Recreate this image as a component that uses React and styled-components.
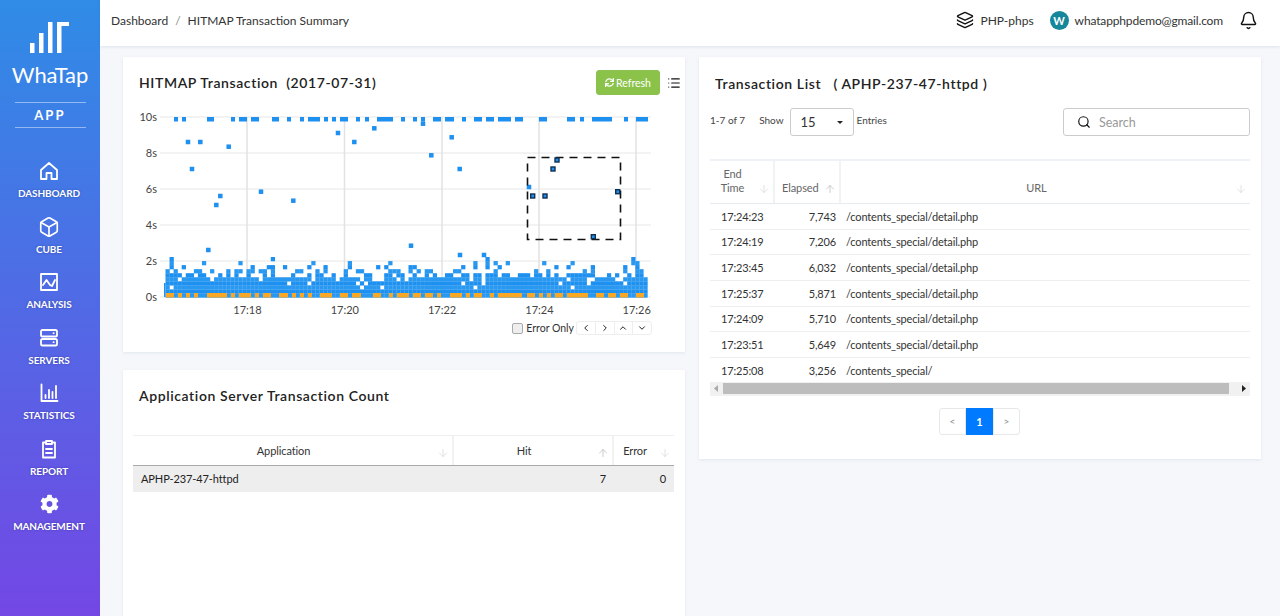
import React from "react"
import styled, { createGlobalStyle } from "styled-components"
import { Box, Layers, Bell, Search, List, ArrowDown, ArrowUp, ChevronLeft, ChevronRight, ChevronUp, ChevronDown } from "lucide-react"
import { FaSync, FaCog } from "react-icons/fa"

const GlobalStyle = createGlobalStyle`
    html, body { margin: 0; height: 100%; }
    body {
        background: #f5f7fb;
        font-family: "Lato", "Liberation Sans", sans-serif;
        color: #333;
        overflow: hidden;
    }
`

const Page = styled.div`
    display: flex;
    width: 1280px;
    height: 616px;
    overflow: hidden;
`

const Sidebar = styled.nav`
    flex: 0 0 100px;
    display: flex;
    flex-direction: column;
    align-items: center;
    padding-top: 22px;
    box-sizing: border-box;
    background: linear-gradient(180deg, #2f8ce6 0%, #7347e4 100%);
    color: #fff;
`

const LogoText = styled.div`
    font-size: 22px;
    font-weight: 400;
    line-height: 28px;
    margin-top: 8px;
    letter-spacing: -0.1px;
`

const AppTag = styled.div`
    width: 71px;
    height: 26px;
    box-sizing: border-box;
    margin: 13px 0 32px;
    border-top: 1px solid rgba(255, 255, 255, 0.45);
    border-bottom: 1px solid rgba(255, 255, 255, 0.45);
    display: flex;
    align-items: center;
    justify-content: center;
    font-size: 13px;
    font-weight: 700;
    letter-spacing: 2.2px;
`

const NavItem = styled.a`
    height: 55.5px;
    margin-right: 2px;
    display: flex;
    flex-direction: column;
    align-items: center;
    font-size: 10px;
    font-weight: 700;
    letter-spacing: -0.1px;
    line-height: 14px;
    text-shadow: 0 0 2px rgba(20, 30, 110, 0.5);
    svg { display: block; height: 22px; margin-bottom: 4px; }
`

const Content = styled.div`
    flex: 1;
    min-width: 0;
    display: flex;
    flex-direction: column;
`

const Topbar = styled.header`
    flex: 0 0 46px;
    display: flex;
    align-items: center;
    padding: 0 22px 6px 11px;
    box-sizing: border-box;
    background: #fff;
    box-shadow: 0 1px 3px rgba(60, 80, 130, 0.12);
    font-size: 12px;
    color: #333;
`

const Crumbs = styled.div`
    flex: 1;
    display: flex;
    gap: 7px;
    span { color: #888; }
`

const TopItem = styled.div`
    display: flex;
    align-items: center;
    gap: ${props => props.gap || 6}px;
    margin-left: ${props => props.left || 0}px;
    letter-spacing: ${props => props.tight ? "-0.15px" : "0"};
`

const Avatar = styled.div`
    width: 19px;
    height: 19px;
    border-radius: 50%;
    background: #14879b;
    color: #fff;
    font-size: 11px;
    font-weight: 700;
    letter-spacing: 0;
    display: flex;
    align-items: center;
    justify-content: center;
`

const Columns = styled.main`
    flex: 1;
    min-height: 0;
    display: grid;
    grid-template-columns: 562px 562px;
    gap: 14px;
    padding: 11px 19px 0 23px;
    align-items: start;
`

const Stack = styled.div`
    display: flex;
    flex-direction: column;
    gap: 18px;
    height: 620px;
`

const Card = styled.section`
    background: #fff;
    box-shadow: 0 1px 3px rgba(60, 80, 130, 0.1);
    box-sizing: border-box;
    flex: ${props => props.grow ? "1" : "none"};
    height: ${props => props.height ? props.height + "px" : "auto"};
`

const HitmapHead = styled.div`
    display: flex;
    align-items: center;
    height: 25px;
    padding: 13px 4px 10px 16px;
`

const Title = styled.h2`
    margin: 0;
    font-size: 14px;
    font-weight: 600;
    letter-spacing: 0.6px;
    white-space: pre;
    color: #222;
    flex: 1;
`

const RefreshButton = styled.button`
    width: 64px;
    height: 25px;
    border: 1px solid #8cc152;
    border-radius: 3px;
    padding: 0;
    background: #8bc34a;
    color: #fff;
    font: 400 10.5px "Lato", sans-serif;
    display: flex;
    align-items: center;
    justify-content: center;
    gap: 2px;
`

const ListButton = styled.div`
    width: 14px;
    margin-left: 7px;
    display: flex;
    color: #111;
`

const ChartSvg = styled.svg`
    display: block;
    width: 562px;
    height: 212px;
`

const ChartControls = styled.div`
    display: flex;
    justify-content: flex-end;
    align-items: center;
    height: 16px;
    margin-top: 3px;
    padding-right: 33px;
    font-size: 10.5px;
    color: #333;
`

const CheckBox = styled.span`
    width: 9px;
    height: 9px;
    border: 1px solid #aaa;
    border-radius: 2px;
    background: #eee;
    margin-right: 3px;
`

const StepGroup = styled.div`
    display: flex;
    margin-left: 2px;
    border: 1px solid #eee;
    border-radius: 3px;
`

const StepButton = styled.span`
    width: 17.75px;
    height: 12px;
    display: flex;
    align-items: center;
    justify-content: center;
    color: #222;
    & + & { border-left: 1px solid #eee; }
`

const CountHead = styled.div`
    padding: 17px 16px 0;
    height: 48px;
`

const Grid = styled.div`
    display: grid;
    grid-template-columns: ${props => props.columns};
`

const CountTable = styled.div`
    margin: 0 11px 0 10px;
    border-top: 1px solid #eee;
`

const HeadCell = styled.div`
    position: relative;
    display: flex;
    align-items: ${props => props.bottom ? "flex-end" : "center"};
    justify-content: ${props => props.left ? "flex-start" : "center"};
    height: ${props => props.height}px;
    box-sizing: border-box;
    padding: 0 ${props => props.left ? 0 : 18}px ${props => props.bottom ? 8 : 0}px ${props => props.left ? 7 : 0}px;
    font-size: 11px;
    letter-spacing: -0.1px;
    color: ${props => props.muted ? "#666" : "#333"};
    border-right: ${props => props.last ? "none" : "2px solid #f2f2f2"};
    line-height: 14px;
    text-align: ${props => props.left ? "left" : "center"};
`

const SortIcon = styled.span`
    position: absolute;
    right: 3px;
    bottom: ${props => props.low || 6}px;
    display: flex;
    color: ${props => props.up ? "#bbb" : "#d8d8d8"};
`

const SelectedRow = styled(Grid)`
    height: 26px;
    align-items: center;
    background: #eee;
    border-top: 1px solid #aaa;
    font-size: 11px;
    letter-spacing: -0.1px;
    color: #222;
`

const ValueCell = styled.div`
    padding: 0 ${props => props.right ? 8 : 0}px 1px ${props => props.pad || 0}px;
    text-align: ${props => props.right ? "right" : "left"};
`

const ListHead = styled.div`
    padding: 18px 5px 0;
    height: 33px;
`

const ListBody = styled.div`
    padding: 0 11px;
`

const Toolbar = styled.div`
    display: flex;
    align-items: flex-start;
    height: 51px;
    font-size: 10px;
    color: #444;
`

const ToolText = styled.span`
    line-height: 24px;
    margin-right: ${props => props.right || 0}px;
    flex: ${props => props.grow ? 1 : "none"};
`

const SelectBox = styled.div`
    width: 64px;
    height: 28px;
    box-sizing: border-box;
    border: 1px solid #ccc;
    border-radius: 3px;
    display: flex;
    align-items: center;
    justify-content: space-between;
    padding: 0 10px;
    font-size: 13px;
    color: #333;
    margin: 0 3px 0 6px;
    &::after {
        content: "";
        border-left: 3.5px solid transparent;
        border-right: 3.5px solid transparent;
        border-top: 3.5px solid #222;
    }
`

const SearchBox = styled.div`
    width: 187px;
    height: 28px;
    box-sizing: border-box;
    border: 1px solid #ccc;
    border-radius: 3px;
    display: flex;
    align-items: center;
    gap: 8px;
    padding-left: 13px;
    font-size: 12.5px;
    color: #999;
    svg { color: #111; }
`

const TxHead = styled(Grid)`
    border-top: 2px solid #eef1f5;
    border-bottom: 1px solid #e6ebf2;
`

const TxRow = styled(Grid)`
    height: 25.67px;
    box-sizing: border-box;
    align-items: center;
    border-bottom: ${props => props.last ? "none" : "1px solid #eee"};
    font-size: 11px;
    letter-spacing: -0.15px;
    color: #333;
`

const TimeCell = styled.div`
    padding-left: 11px;
`

const ElapsedCell = styled.div`
    text-align: right;
    padding-right: 5px;
`

const UrlCell = styled.div`
    padding-left: 5px;
`

const ScrollTrack = styled.div`
    display: flex;
    align-items: center;
    height: 14px;
    margin-top: -2px;
    background: #f1f1f1;
    color: #555;
`

const ScrollThumb = styled.div`
    flex: 1;
    height: 11px;
    margin: 0 8px 0 0;
    background: #bdbdbd;
`

const ScrollArrow = styled.span`
    width: 13px;
    display: flex;
    justify-content: center;
    svg { fill: currentColor; }
    color: ${props => props.dim ? "#aaa" : "#222"};
`

const Pager = styled.div`
    display: flex;
    justify-content: center;
    margin-top: 12px;
    padding: 0 1px 24px 0;
`

const PageButton = styled.span`
    width: 27px;
    height: 27px;
    box-sizing: border-box;
    display: flex;
    align-items: center;
    justify-content: center;
    font-size: ${props => props.active ? 11 : 10}px;
    font-weight: ${props => props.active ? 700 : 400};
    color: ${props => props.active ? "#fff" : "#888"};
    background: ${props => props.active ? "#007bff" : "#fff"};
    border: 1px solid ${props => props.active ? "#007bff" : "#e8e8e8"};
    border-radius: ${props => props.side === "l" ? "3px 0 0 3px" : props.side === "r" ? "0 3px 3px 0" : "0"};
`

const Logo = () => (
    <svg width="40" height="31" viewBox="0 0 40 31" fill="#fff">
        <rect x="0" y="21" width="4.5" height="10" />
        <rect x="9" y="11" width="4.5" height="20" />
        <rect x="18" y="0" width="4.5" height="31" />
        <path d="M27 0h12v4h-7.5v27H27z" />
    </svg>
)

const stroke = { fill: "none", stroke: "#fff", strokeWidth: 1.8, strokeLinejoin: "round", strokeLinecap: "round" }

const HomeIcon = () => (
    <svg width="22" height="22" viewBox="0 0 22 22" {...stroke}>
        <path d="M11 3 3 10v9h5.5v-6h5v6H19v-9z" />
    </svg>
)

const AnalysisIcon = () => (
    <svg width="22" height="22" viewBox="0 0 22 22" {...stroke}>
        <path d="M3 3h16v16H3z" />
        <path d="M5 14l3.5-5 3.5 5 2 1 3-6" />
    </svg>
)

const ServersIcon = () => (
    <svg width="22" height="22" viewBox="0 0 22 22" {...stroke}>
        <rect x="3" y="3" width="16" height="6.5" rx="1.6" />
        <rect x="3" y="12" width="16" height="6.5" rx="1.6" />
        <path d="M15.5 6.2h.2M15.5 15.2h.2" />
    </svg>
)

const StatsIcon = () => (
    <svg width="22" height="22" viewBox="0 0 22 22" {...stroke}>
        <path d="M3.5 2.5v16.5h16" />
        <path d="M7.5 16v-3M11 16V8M14.5 16v-6M18 16V4" />
    </svg>
)

const ReportIcon = () => (
    <svg width="22" height="22" viewBox="0 0 22 22" {...stroke}>
        <path d="M8 4.5H5v15h12v-15h-3" />
        <path d="M8 3h6v3H8zM8 11h6M8 15h6" />
    </svg>
)

const navItems = [
    { label: "DASHBOARD", icon: <HomeIcon /> },
    { label: "CUBE", icon: <Box size={22} strokeWidth={1.8} /> },
    { label: "ANALYSIS", icon: <AnalysisIcon /> },
    { label: "SERVERS", icon: <ServersIcon /> },
    { label: "STATISTICS", icon: <StatsIcon /> },
    { label: "REPORT", icon: <ReportIcon /> },
    { label: "MANAGEMENT", icon: <FaCog size={19} /> },
]

// hitmap data, everything in page pixels / grid cells of about 4px
const CELL = 4.05
const LEFT = 165.5
const BOTTOM = 297.5
const BLUE = "#1e90f0"

const topRuns = [
    [174, 178], [182, 186], [207, 214], [231, 235], [239, 247], [251, 259], [272, 279], [287, 291], [300, 304],
    [308, 320], [324, 328], [332, 336], [340, 348], [356, 360], [365, 369], [377, 393], [401, 405], [413, 417],
    [421, 425], [433, 441], [445, 454], [462, 466], [474, 482], [486, 494], [498, 511], [515, 523], [539, 547],
    [567, 575], [580, 584], [592, 612], [624, 628], [636, 648],
]

const orangeRuns = [
    [166, 174], [178, 182], [186, 190], [194, 198], [207, 227], [231, 235], [239, 251], [255, 259], [263, 271],
    [279, 288], [292, 296], [300, 304], [308, 312], [320, 332], [340, 348], [352, 361], [373, 381], [389, 393],
    [397, 409], [413, 421], [425, 433], [437, 441], [450, 462], [466, 470], [474, 482], [490, 494], [498, 522],
    [527, 535], [539, 543], [547, 551], [555, 563], [567, 588], [596, 604], [608, 616], [620, 628], [636, 644],
]

const dots = [
    [188, 142], [200.3, 142], [228.7, 146.7], [192, 169], [220.3, 196], [216.3, 205], [261, 191.7], [293.3, 200.7],
    [338, 133], [354.3, 142], [374.3, 128.3], [451.7, 137.3], [431.3, 155.3], [459.7, 169], [423, 123.7], [529, 187],
    [208.3, 250], [411, 245.7], [460, 255], [484, 255],
]

const picked = [[532.7, 196], [545, 196], [553, 169], [557, 160], [617.7, 191.7], [593.3, 236.7]]

// explicit upper rows of the band, [row, columns]
const upperRows = [
    [9, [1, 26, 79, 115]],
    [8, [1, 9, 18, 36, 45, 55, 76, 79, 81, 84, 93, 100, 115, 116]],
    [7, [1, 4, 21, 25, 26, 29, 35, 39, 45, 52, 54, 60, 61, 73, 76, 79, 82, 96, 99, 105, 113, 116]],
]

const makeBand = () => {
    let seed = 4211
    const rand = () => {
        seed = (seed * 16807) % 2147483647
        return seed / 2147483647
    }
    const chance = [1, 1, 0.97, 0.95, 0.88, 0.55, 0.3]
    const cells = []
    for (let col = 0; col < 119; col++) {
        chance.forEach((p, row) => {
            if (rand() < p) cells.push([col, row])
        })
    }
    upperRows.forEach(([row, cols]) => cols.forEach(col => cells.push([col, row])))
    return cells
}

const band = makeBand()

const HitmapChart = () => (
    <ChartSvg viewBox="123 105 562 212">
        {[117, 153, 189, 225, 261, 297].map(y => (
            <line key={y} x1="160" x2="651" y1={y} y2={y} stroke="#e8e8e8" strokeWidth="1.2" />
        ))}
        {[247, 344.5, 442, 539, 636].map(x => (
            <line key={x} x1={x} x2={x} y1="117" y2="297" stroke="#e2e2e2" strokeWidth="1.5" />
        ))}
        {["10s", "8s", "6s", "4s", "2s", "0s"].map((t, i) => (
            <text key={t} x="157" y={121 + i * 36} textAnchor="end" fontSize="11" fill="#444">{t}</text>
        ))}
        {["17:18", "17:20", "17:22", "17:24", "17:26"].map((t, i) => (
            <text key={t} x={247.5 + i * 97.3} y="314" textAnchor="middle" fontSize="11" fill="#444">{t}</text>
        ))}
        <rect x="164" y="283" width="1.5" height="14" fill={BLUE} />
        {band.map(([col, row], i) => (
            <rect key={i} x={LEFT + col * CELL} y={BOTTOM - (row + 1) * CELL} width={CELL + 0.2} height={CELL + 0.2}
                fill={row % 2 ? BLUE : "#2898f0"} />
        ))}
        {orangeRuns.map(([a, b]) => (
            <rect key={a} x={a} y="293" width={b - a} height="4.5" fill="#f9a825" />
        ))}
        {topRuns.map(([a, b]) => (
            <rect key={a} x={a} y="117" width={b - a} height="4.5" fill={BLUE} />
        ))}
        {dots.map(([x, y]) => (
            <rect key={x} x={x - 2.25} y={y - 2.25} width="4.5" height="4.5" fill={BLUE} />
        ))}
        <rect x="527.5" y="157.5" width="93" height="82" fill="none" stroke="#111" strokeWidth="1.6" strokeDasharray="8 6" />
        {picked.map(([x, y]) => (
            <rect key={x} x={x - 2} y={y - 2} width="4" height="4" fill={BLUE} stroke="#12304f" strokeWidth="1.4" />
        ))}
    </ChartSvg>
)

const transactions = [
    ["17:24:23", "7,743", "/contents_special/detail.php"],
    ["17:24:19", "7,206", "/contents_special/detail.php"],
    ["17:23:45", "6,032", "/contents_special/detail.php"],
    ["17:25:37", "5,871", "/contents_special/detail.php"],
    ["17:24:09", "5,710", "/contents_special/detail.php"],
    ["17:23:51", "5,649", "/contents_special/detail.php"],
    ["17:25:08", "3,256", "/contents_special/"],
]

const Sort = ({ up, low }) => (
    <SortIcon up={up} low={low}>
        {up ? <ArrowUp size={12} strokeWidth={1.5} /> : <ArrowDown size={12} strokeWidth={1.5} />}
    </SortIcon>
)

const txColumns = "65px 66px 1fr"
const countColumns = "321px 160px 60px"

export default function App() {
    return (
        <Page>
            <GlobalStyle />
            <Sidebar>
                <Logo />
                <LogoText>WhaTap</LogoText>
                <AppTag>APP</AppTag>
                {navItems.map(item => (
                    <NavItem key={item.label}>
                        {item.icon}
                        {item.label}
                    </NavItem>
                ))}
            </Sidebar>
            <Content>
                <Topbar>
                    <Crumbs>
                        Dashboard <span>/</span> HITMAP Transaction Summary
                    </Crumbs>
                    <TopItem gap={7}>
                        <Layers size={18} strokeWidth={1.9} color="#111" />
                        PHP-phps
                    </TopItem>
                    <TopItem left={16} tight>
                        <Avatar>W</Avatar>
                        whatapphpdemo@gmail.com
                    </TopItem>
                    <TopItem left={16}>
                        <Bell size={19} strokeWidth={1.8} color="#111" />
                    </TopItem>
                </Topbar>
                <Columns>
                    <Stack>
                        <Card height={295}>
                            <HitmapHead>
                                <Title>{"HITMAP Transaction  (2017-07-31)"}</Title>
                                <RefreshButton><FaSync size={9} />Refresh</RefreshButton>
                                <ListButton><List size={14} strokeWidth={2} /></ListButton>
                            </HitmapHead>
                            <HitmapChart />
                            <ChartControls>
                                <CheckBox />
                                Error Only
                                <StepGroup>
                                    <StepButton><ChevronLeft size={10} strokeWidth={2.4} /></StepButton>
                                    <StepButton><ChevronRight size={10} strokeWidth={2.4} /></StepButton>
                                    <StepButton><ChevronUp size={10} strokeWidth={2.4} /></StepButton>
                                    <StepButton><ChevronDown size={10} strokeWidth={2.4} /></StepButton>
                                </StepGroup>
                            </ChartControls>
                        </Card>
                        <Card grow>
                            <CountHead>
                                <Title>Application Server Transaction Count</Title>
                            </CountHead>
                            <CountTable>
                                <Grid columns={countColumns}>
                                    <HeadCell height={29}>Application<Sort /></HeadCell>
                                    <HeadCell height={29}>Hit<Sort up /></HeadCell>
                                    <HeadCell height={29} last>Error<Sort /></HeadCell>
                                </Grid>
                                <SelectedRow columns={countColumns}>
                                    <ValueCell pad={8}>APHP-237-47-httpd</ValueCell>
                                    <ValueCell right>7</ValueCell>
                                    <ValueCell right>0</ValueCell>
                                </SelectedRow>
                            </CountTable>
                        </Card>
                    </Stack>
                    <Card>
                        <ListBody>
                            <ListHead>
                                <Title>{"Transaction List   ( APHP-237-47-httpd )"}</Title>
                            </ListHead>
                            <Toolbar>
                                <ToolText right={14}>1-7 of 7</ToolText>
                                <ToolText>Show</ToolText>
                                <SelectBox>15</SelectBox>
                                <ToolText grow>Entries</ToolText>
                                <SearchBox>
                                    <Search size={14} strokeWidth={2} />
                                    Search
                                </SearchBox>
                            </Toolbar>
                            <TxHead columns={txColumns}>
                                <HeadCell height={42} muted bottom>End<br />Time<Sort low={8} /></HeadCell>
                                <HeadCell height={42} muted bottom left>Elapsed<Sort up low={8} /></HeadCell>
                                <HeadCell height={42} muted bottom last>URL<Sort low={8} /></HeadCell>
                            </TxHead>
                            {transactions.map((tx, i) => (
                                <TxRow key={tx[0]} columns={txColumns} last={i === transactions.length - 1}>
                                    <TimeCell>{tx[0]}</TimeCell>
                                    <ElapsedCell>{tx[1]}</ElapsedCell>
                                    <UrlCell>{tx[2]}</UrlCell>
                                </TxRow>
                            ))}
                            <ScrollTrack>
                                <ScrollArrow dim><svg width="5" height="7" viewBox="0 0 5 7"><path d="M4 0v7L0 3.5z" /></svg></ScrollArrow>
                                <ScrollThumb />
                                <ScrollArrow><svg width="5" height="7" viewBox="0 0 5 7"><path d="M1 0v7l4-3.5z" /></svg></ScrollArrow>
                            </ScrollTrack>
                            <Pager>
                                <PageButton side="l">&lt;</PageButton>
                                <PageButton active>1</PageButton>
                                <PageButton side="r">&gt;</PageButton>
                            </Pager>
                        </ListBody>
                    </Card>
                </Columns>
            </Content>
        </Page>
    )
}
